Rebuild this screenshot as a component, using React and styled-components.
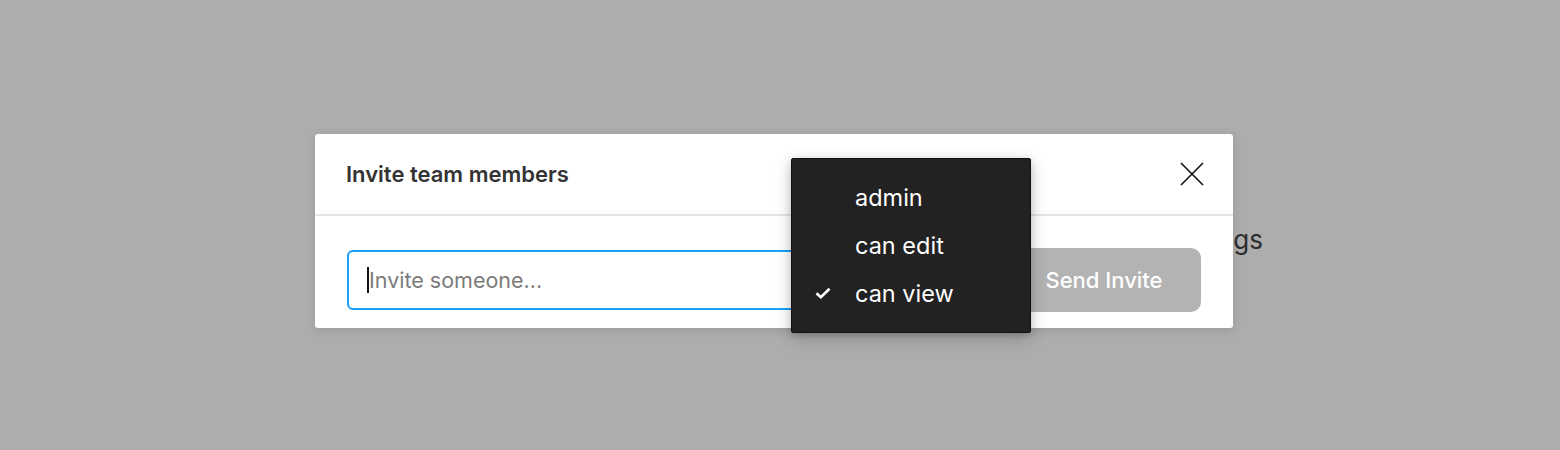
import React from 'react';
import styled, { createGlobalStyle } from 'styled-components';

const GlobalStyle = createGlobalStyle`
  html, body {
    margin: 0;
    padding: 0;
    background: #adadad;
  }
  body {
    font-family: Inter, "Noto Sans", sans-serif;
  }
`;

const roles = [
  { label: 'admin', checked: false },
  { label: 'can edit', checked: false },
  { label: 'can view', checked: true },
];

const App = () => {
  return (
    <Stage>
      <GlobalStyle />
      <PageBehind>
        <BehindTitle>Team settings</BehindTitle>
      </PageBehind>
      <Modal>
        <Header>
          <Title>Invite team members</Title>
          <CloseButton aria-label="Close">
            <svg width="24" height="24" viewBox="0 0 24 24" fill="none">
              <path d="M1 1L23 23M23 1L1 23" stroke="#111" strokeWidth="1.6" />
            </svg>
          </CloseButton>
        </Header>
        <Body>
          <InviteInput>
            <Caret />
            <Placeholder>Invite someone...</Placeholder>
          </InviteInput>
          {/* role picker sits here, hidden under the open menu */}
          <RoleSlot />
          <SendButton>Send Invite</SendButton>
        </Body>
      </Modal>
      <Menu>
        {roles.map((r) => (
          <MenuItem key={r.label}>
            <Check>
              {r.checked && (
                <svg width="16" height="12" viewBox="0 0 16 12" fill="none">
                  <path d="M1.5 6.2L5.8 10.2L14.5 1.8" stroke="#fff" strokeWidth="2.6" />
                </svg>
              )}
            </Check>
            {r.label}
          </MenuItem>
        ))}
      </Menu>
    </Stage>
  );
};

const Stage = styled.div`
  position: relative;
  width: 1560px;
  height: 450px;
  overflow: hidden;
  background: #adadad;
`;

const PageBehind = styled.div`
  display: flex;
  justify-content: flex-end;
  padding: 222px 297px 0 0;
`;

const BehindTitle = styled.div`
  font-size: 26px;
  color: #2e2e2e;
  line-height: 36px;
`;

const Modal = styled.div`
  position: absolute;
  left: 315px;
  top: 134px;
  width: 918px;
  height: 194px;
  background: #fff;
  border-radius: 3px;
  box-shadow: 0 2px 10px rgba(0, 0, 0, 0.12);
  display: flex;
  flex-direction: column;
`;

const Header = styled.div`
  height: 80px;
  border-bottom: 2px solid #e5e5e5;
  display: flex;
  align-items: center;
  justify-content: space-between;
  padding: 0 29px 0 31px;
`;

const Title = styled.h2`
  margin: 0;
  font-size: 22px;
  font-weight: 600;
  color: #333;
`;

const CloseButton = styled.button`
  border: 0;
  background: none;
  padding: 0;
  width: 24px;
  height: 24px;
  display: flex;
`;

const Body = styled.div`
  flex: 1;
  display: flex;
  align-items: center;
  gap: 14px;
  padding: 16px 32px 0 32px;
`;

const InviteInput = styled.div`
  flex: 1;
  height: 60px;
  box-sizing: border-box;
  border: 2px solid #18a0fb;
  border-radius: 6px;
  display: flex;
  align-items: center;
  padding-left: 18px;
`;

const Caret = styled.span`
  width: 2px;
  height: 26px;
  background: #111;
`;

const Placeholder = styled.span`
  font-size: 21.5px;
  color: #7b7b7b;
`;

const RoleSlot = styled.div`
  width: 120px;
  height: 40px;
`;

const SendButton = styled.button`
  width: 194px;
  height: 64px;
  border: 0;
  border-radius: 10px;
  background: #b3b3b3;
  color: #fff;
  font-family: Inter, "Noto Sans", sans-serif;
  font-size: 22px;
  font-weight: 500;
`;

const Menu = styled.ul`
  position: absolute;
  left: 791px;
  top: 158px;
  width: 240px;
  height: 175px;
  box-sizing: border-box;
  margin: 0;
  padding: 14px 0 0;
  list-style: none;
  background: #222;
  border: 1px solid #111;
  border-radius: 2px;
  box-shadow: 0 5px 17px rgba(0, 0, 0, 0.2), 0 2px 7px rgba(0, 0, 0, 0.15);
`;

const MenuItem = styled.li`
  height: 48px;
  display: flex;
  align-items: center;
  color: #fff;
  font-size: 23.5px;
`;

const Check = styled.span`
  width: 63px;
  padding-left: 23px;
  box-sizing: border-box;
  display: flex;
  align-items: center;
`;

export default App;
